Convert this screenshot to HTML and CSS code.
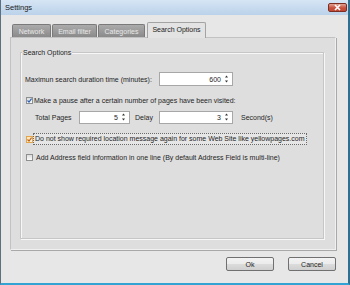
FILE: index.html
```html
<!DOCTYPE html>
<html>
<head>
<meta charset="utf-8">
<link rel="stylesheet" href="styles.css">
</head>
<body>
<div class="window">
  <div class="titlebar">
    <span class="title">Settings</span>
    <span class="close"><svg width="9" height="7" viewBox="0 0 9 7"><path d="M2 1 L7 6 M7 1 L2 6" stroke="#fff" stroke-width="1.6"/></svg></span>
  </div>
  <div class="client">
    <div class="tabs">
      <div class="tab t1">Network</div>
      <div class="tab t2">Email filter</div>
      <div class="tab t3">Categories</div>
      <div class="tab active">Search Options</div>
    </div>
    <div class="panel">
      <div class="group">
        <span class="legend">Search Options</span>
        <div class="row r1">
          <span class="lbl-max">Maximun search duration time (minutes):</span>
          <div class="spin w74"><span>600</span><svg class="arr" width="3" height="8" viewBox="0 0 3 8"><path d="M1.5 0.5 L3 2.5 L0 2.5 Z M0 5.5 L3 5.5 L1.5 7.5 Z" fill="#333"/></svg></div>
        </div>
        <div class="row r2">
          <span class="cb"><svg width="5" height="5" viewBox="0 0 5 5"><path d="M0.5 2.5 L2 4 L4.6 0.6" fill="none" stroke="#2c5fb4" stroke-width="1.2"/></svg></span>
          <span class="txt2">Make a pause after a certain number of pages have been visited:</span>
        </div>
        <div class="row r3">
          <span class="lbl-tp">Total Pages</span>
          <div class="spin w51"><span>5</span><svg class="arr" width="3" height="8" viewBox="0 0 3 8"><path d="M1.5 0.5 L3 2.5 L0 2.5 Z M0 5.5 L3 5.5 L1.5 7.5 Z" fill="#333"/></svg></div>
          <span class="lbl-delay">Delay</span>
          <div class="spin w74"><span>3</span><svg class="arr" width="3" height="8" viewBox="0 0 3 8"><path d="M1.5 0.5 L3 2.5 L0 2.5 Z M0 5.5 L3 5.5 L1.5 7.5 Z" fill="#333"/></svg></div>
          <span class="lbl-sec">Second(s)</span>
        </div>
        <div class="row r4">
          <span class="cb hot"><svg width="5" height="5" viewBox="0 0 5 5"><path d="M0.5 2.5 L2 4 L4.6 0.6" fill="none" stroke="#c0641a" stroke-width="1.2"/></svg></span>
          <span class="focus">Do not show required location message again for some Web Site like yellowpages.com</span>
        </div>
        <div class="row r5">
          <span class="cb"></span>
          <span class="txt5">Add Address field information in one line (By default Address Field is multi-line)</span>
        </div>
      </div>
    </div>
    <div class="buttons">
      <button class="btn">Ok</button>
      <button class="btn">Cancel</button>
    </div>
  </div>
</div>
</body>
</html>
```
FILE: styles.css
```css
html, body {
  margin: 0;
  padding: 0;
}
body {
  width: 350px;
  height: 285px;
  overflow: hidden;
  font-family: "Liberation Sans", Arial, sans-serif;
  font-size: 7px;
  color: #1e1e1e;
  background: #e7e7e7;
}
.window {
  box-sizing: border-box;
  width: 350px;
  height: 285px;
  display: flex;
  flex-direction: column;
  border-left: 1px solid #5d7080;
  border-right: 2px solid #2f6f8f;
  border-bottom: 2px solid #33a3d3;
  background: #e7e7e7;
}
.titlebar {
  height: 15px;
  flex: none;
  display: flex;
  align-items: center;
  justify-content: space-between;
  padding: 0 1px 0 4px;
  background: linear-gradient(#d6e5f4, #bad2ea);
}
.title {
  font-size: 7.5px;
  color: #1a1a1a;
}
.close {
  width: 19px;
  height: 9px;
  box-sizing: border-box;
  border: 1px solid #7d2e22;
  border-radius: 2px;
  background: linear-gradient(#e2a394, #c8513e 55%, #c04a36);
  display: flex;
  align-items: center;
  justify-content: center;
}
.close svg { display: block; }
.client {
  flex: 1;
  padding: 7px 12px 0 9px;
  display: flex;
  flex-direction: column;
}
.tabs {
  display: flex;
  align-items: flex-end;
  height: 15px;
  padding-left: 2px;
  gap: 1px;
  position: relative;
  z-index: 1;
}
.tab {
  height: 13px;
  box-sizing: border-box;
  display: flex;
  align-items: center;
  justify-content: center;
  border: 1px solid #7a7a7a;
  border-bottom: none;
  border-radius: 2px 2px 0 0;
  background: linear-gradient(#ababab, #8a8a8a);
  color: #e8e8e8;
}
.t1 { width: 39px; }
.t2 { width: 45px; }
.t3 { width: 47px; }
.tab.active {
  width: 59px;
  height: 16px;
  margin-left: 1px;
  margin-bottom: -1px;
  background: #e3e3e3;
  border-color: #a3a3a3;
  color: #222;
  padding-bottom: 2px;
}
.panel {
  height: 213px;
  box-sizing: border-box;
  border: 1px solid #c2c2c2;
  border-right-color: #f0f0f0;
  border-bottom-color: #f0f0f0;
  box-shadow: 1px 1px 0 #a9a9a9;
  background: #dedede;
  display: flex;
  flex-direction: column;
}
.group {
  position: relative;
  flex: 1;
  margin: 14px 11px 10px 9px;
  border: 1px solid #c6c6c6;
  box-shadow: inset 1px 1px 0 #f7f7f7, 1px 1px 0 #f7f7f7;
  padding: 19px 0 0 4px;
  display: flex;
  flex-direction: column;
}
.legend {
  position: absolute;
  top: -5px;
  left: 1px;
  padding: 0 1px;
  line-height: 9px;
  background: #dedede;
}
.row {
  height: 14px;
  display: flex;
  align-items: center;
  white-space: nowrap;
}
.r2 { margin-top: 7px; }
.r3 { margin-top: 3px; padding-left: 10px; }
.r4 { margin-top: 8px; }
.r5 { margin-top: 4px; }
.lbl-max { width: 134px; }
.spin {
  box-sizing: border-box;
  height: 14px;
  border: 1px solid #a7a7a7;
  background: #fff;
  display: flex;
  align-items: center;
  justify-content: flex-end;
  padding-right: 4px;
  gap: 4px;
}
.r3 .spin { height: 13px; }
.arr { display: block; }
.w74 { width: 74px; }
.w51 { width: 51px; }
.lbl-tp { width: 44px; }
.lbl-delay { margin-left: 5px; width: 24px; }
.lbl-sec { margin-left: 8px; }
.cb {
  box-sizing: border-box;
  width: 7px;
  height: 7px;
  margin-left: 1px;
  border: 1px solid #8e8f8f;
  background: linear-gradient(#dcdcdc, #fbfbfb);
  display: flex;
  align-items: center;
  justify-content: center;
}
.cb svg { display: block; }
.cb.hot {
  border-color: #e4a44a;
  background: linear-gradient(#fbe3b6, #fff3dc);
}
.txt2 { margin-left: 1px; }
.focus {
  margin-left: 0;
  padding: 0 1px;
  line-height: 10px;
  border: 1px dotted #6a6a6a;
  background: #e6e6e6;
}
.txt5 { margin-left: 3px; }
.buttons {
  display: flex;
  justify-content: flex-end;
  gap: 14px;
  margin-top: 7px;
}
.btn {
  box-sizing: border-box;
  width: 48px;
  height: 14px;
  padding: 0;
  border: 1px solid #707070;
  border-radius: 2px;
  background: linear-gradient(#f3f3f3, #ebebeb 50%, #dcdcdc 50%, #cfcfcf);
  font-family: "Liberation Sans", Arial, sans-serif;
  font-size: 7px;
  color: #1e1e1e;
}
```
